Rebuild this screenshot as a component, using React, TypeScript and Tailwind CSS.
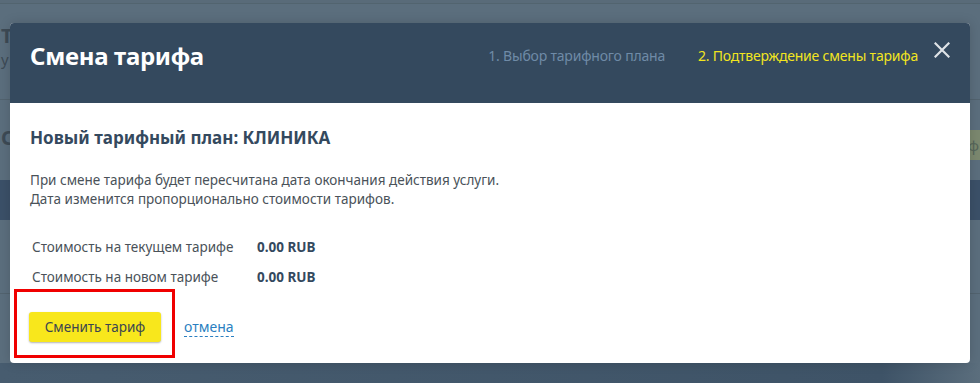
import React from "react";

export default function App() {
  const font = { fontFamily: '"Noto Sans", "Open Sans", sans-serif' };
  return (
    <div className="relative w-[980px] h-[383px] overflow-hidden bg-[#5b6e7d]" style={font}>
      {/* background page under overlay */}
      <div className="flex flex-col w-full h-full">
        <div className="h-[4px] bg-[#596b79] border-b border-[#52646f]" />
        <div className="h-[95px] flex flex-col pl-[1px] pt-[20px] text-[#3d4a55]">
          <div className="text-[20px] font-bold leading-[24px]">Т</div>
          <div className="text-[15px] leading-[22px]">у</div>
        </div>
        <div className="h-px bg-[#52636f]" />
        <div className="h-[80px] flex items-start pt-[26px] pl-[1px] text-[#3d4a55] text-[20px] font-bold leading-[24px] justify-between">
          <span>С</span>
          <span className="w-[12px] h-[30px] mt-[4px] bg-[#7b886f] text-[#56655a] text-[15px] font-normal leading-[30px] overflow-hidden">ф</span>
        </div>
        <div className="h-[40px] bg-[#3b5068]" />
        <div className="h-[73px]" />
        <div className="h-px bg-[#52636f]" />
        <div className="h-[69px]" />
        <div className="h-[20px] bg-gradient-to-r from-[#475c6f] via-[#3e5367] via-90% to-[#5b6e7d]" />
      </div>

      {/* modal */}
      <div className="absolute left-[10px] top-[23px] w-[960px] h-[340px] rounded-[4px] overflow-hidden bg-white flex flex-col shadow-[0_0_12px_rgba(0,0,0,0.15)]">
        <div className="h-[80px] bg-[#34495e] flex items-center pl-[20px] pr-[20px]">
          <div className="text-white text-[24px] font-bold leading-none tracking-[-0.3px] -mt-[14px]">Смена тарифа</div>
          <div className="ml-auto flex items-center gap-[33px] text-[14px] -mt-[16px] tracking-[-0.2px]">
            <span className="text-[#6f8ba7]">1. Выбор тарифного плана</span>
            <span className="text-[#f2e51e]">2. Подтверждение смены тарифа</span>
          </div>
          <svg className="ml-[16px] -mt-[26px]" width="16" height="16" viewBox="0 0 16 16">
            <path d="M1.5 1.5 L14.5 14.5 M14.5 1.5 L1.5 14.5" stroke="#dfe3e7" strokeWidth="2.2" strokeLinecap="square" />
          </svg>
        </div>
        <div className="flex flex-col pl-[20px] pt-[24px]">
          <div className="text-[#34495e] text-[17px] font-bold leading-[22px]">Новый тарифный план: КЛИНИКА</div>
          <div className="mt-[22px] text-[#4a5259] text-[13.5px] leading-[19px]">
            <div>При смене тарифа будет пересчитана дата окончания действия услуги.</div>
            <div>Дата изменится пропорционально стоимости тарифов.</div>
          </div>
          <div className="mt-[29px] flex flex-col gap-[11px] pl-[2px] text-[13.5px] leading-[19px]">
            <div className="flex">
              <span className="w-[225px] text-[#4a5259]">Стоимость на текущем тарифе</span>
              <span className="font-bold text-[#34495e]">0.00 RUB</span>
            </div>
            <div className="flex">
              <span className="w-[225px] text-[#4a5259]">Стоимость на новом тарифе</span>
              <span className="font-bold text-[#34495e]">0.00 RUB</span>
            </div>
          </div>
          <div className="mt-[2px] -ml-[16px] flex items-center">
            <div className="w-[161px] h-[69px] border-[3px] border-[#f00000] flex items-center pl-[12px] pt-[7px]">
              <button className="w-[132px] h-[30px] bg-[#f8e71c] rounded-[3px] text-[#3b4550] text-[13.5px] shadow-[0_1px_2px_rgba(0,0,0,0.3)]">
                Сменить тариф
              </button>
            </div>
            <a className="ml-[9px] mt-[7px] text-[#2a7fc1] text-[14px] leading-[18px] border-b border-dashed border-[#2a7fc1]">отмена</a>
          </div>
        </div>
      </div>
    </div>
  );
}
